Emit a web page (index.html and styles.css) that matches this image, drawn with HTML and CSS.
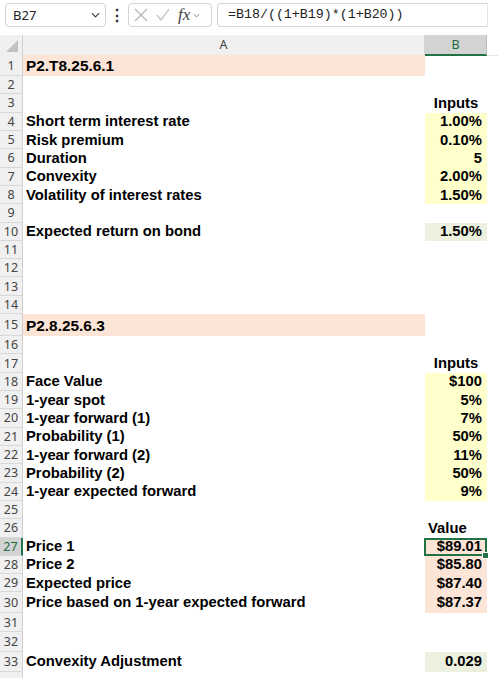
FILE: index.html
```
<!DOCTYPE html>
<html lang="en">
<head>
  <meta charset="UTF-8">
  <title>Convexity Adjustment</title>
  <link rel="stylesheet" href="styles.css">
</head>
<body>
  <div id="formula-bar">
    <div id="name-box">
      <span>B27</span>
      <svg class="chev" viewBox="0 0 10 6"><polyline points="1,1 5,5 9,1"></polyline></svg>
    </div>
    <div id="bar-dots">&#8942;</div>
    <div id="fx-box">
      <svg class="fx-icon" viewBox="0 0 14 14"><line x1="1" y1="1" x2="13" y2="13"></line><line x1="13" y1="1" x2="1" y2="13"></line></svg>
      <svg class="fx-icon" viewBox="0 0 14 14"><polyline points="1,7 5,12 13,1"></polyline></svg>
      <span class="fx-label">fx</span>
      <svg class="chev small" viewBox="0 0 10 6"><polyline points="1,1 5,5 9,1"></polyline></svg>
    </div>
    <div id="formula-input">=B18/((1+B19)*(1+B20))</div>
  </div>

  <div id="sheet">
    <div class="row col-head">
      <div class="corner"><svg viewBox="0 0 12 12"><polygon points="12,0 12,12 0,12"></polygon></svg></div>
      <div class="ch">A</div>
      <div class="ch sel">B</div>
      <div class="ch-rest"></div>
    </div>

    <div class="row h21"><div class="rh">1</div><div class="c peach title">P2.T8.25.6.1</div><div class="c"></div></div>
    <div class="row"><div class="rh">2</div><div class="c"></div><div class="c"></div></div>
    <div class="row"><div class="rh">3</div><div class="c"></div><div class="c mid">Inputs</div></div>
    <div class="row"><div class="rh">4</div><div class="c">Short term interest rate</div><div class="c num yellow">1.00%</div></div>
    <div class="row"><div class="rh">5</div><div class="c">Risk premium</div><div class="c num yellow">0.10%</div></div>
    <div class="row"><div class="rh">6</div><div class="c">Duration</div><div class="c num yellow">5</div></div>
    <div class="row"><div class="rh">7</div><div class="c">Convexity</div><div class="c num yellow">2.00%</div></div>
    <div class="row"><div class="rh">8</div><div class="c">Volatility of interest rates</div><div class="c num yellow">1.50%</div></div>
    <div class="row"><div class="rh">9</div><div class="c"></div><div class="c"></div></div>
    <div class="row"><div class="rh">10</div><div class="c">Expected return on bond</div><div class="c num green">1.50%</div></div>
    <div class="row"><div class="rh">11</div><div class="c"></div><div class="c"></div></div>
    <div class="row"><div class="rh">12</div><div class="c"></div><div class="c"></div></div>
    <div class="row"><div class="rh">13</div><div class="c"></div><div class="c"></div></div>
    <div class="row"><div class="rh">14</div><div class="c"></div><div class="c"></div></div>
    <div class="row h22"><div class="rh">15</div><div class="c peach title">P2.8.25.6.3</div><div class="c"></div></div>
    <div class="row"><div class="rh">16</div><div class="c"></div><div class="c"></div></div>
    <div class="row"><div class="rh">17</div><div class="c"></div><div class="c mid">Inputs</div></div>
    <div class="row"><div class="rh">18</div><div class="c">Face Value</div><div class="c num yellow">$100</div></div>
    <div class="row"><div class="rh">19</div><div class="c">1-year spot</div><div class="c num yellow">5%</div></div>
    <div class="row"><div class="rh">20</div><div class="c">1-year forward (1)</div><div class="c num yellow">7%</div></div>
    <div class="row"><div class="rh">21</div><div class="c">Probability (1)</div><div class="c num yellow">50%</div></div>
    <div class="row"><div class="rh">22</div><div class="c">1-year forward (2)</div><div class="c num yellow">11%</div></div>
    <div class="row"><div class="rh">23</div><div class="c">Probability (2)</div><div class="c num yellow">50%</div></div>
    <div class="row"><div class="rh">24</div><div class="c">1-year expected forward</div><div class="c num yellow">9%</div></div>
    <div class="row"><div class="rh">25</div><div class="c"></div><div class="c"></div></div>
    <div class="row"><div class="rh">26</div><div class="c"></div><div class="c">Value</div></div>
    <div class="row"><div class="rh sel">27</div><div class="c">Price 1</div><div class="c num peach active">$89.01</div></div>
    <div class="row"><div class="rh">28</div><div class="c">Price 2</div><div class="c num peach">$85.80</div></div>
    <div class="row"><div class="rh">29</div><div class="c">Expected price</div><div class="c num peach">$87.40</div></div>
    <div class="row h21"><div class="rh">30</div><div class="c">Price based on 1-year expected forward</div><div class="c num peach">$87.37</div></div>
    <div class="row"><div class="rh">31</div><div class="c"></div><div class="c"></div></div>
    <div class="row h20"><div class="rh">32</div><div class="c"></div><div class="c"></div></div>
    <div class="row h20"><div class="rh">33</div><div class="c">Convexity Adjustment</div><div class="c num green">0.029</div></div>
    <div class="row"><div class="rh"></div><div class="c"></div><div class="c"></div></div>
  </div>
</body>
</html>
```

FILE: styles.css
```
html, body {
  margin: 0;
  padding: 0;
  background: #fff;
  width: 498px;
  height: 678px;
  overflow: hidden;
  font-family: "Liberation Sans", Arial, sans-serif;
}

/* formula bar */
#formula-bar {
  display: flex;
  align-items: flex-start;
  height: 35px;
  padding: 3px 0 0 5px;
  box-sizing: border-box;
  font-family: "Noto Sans", "Open Sans", sans-serif;
  font-size: 13px;
  color: #222;
}
#name-box {
  width: 101px;
  height: 24px;
  box-sizing: border-box;
  border: 1px solid #d4d4d4;
  border-radius: 4px;
  display: flex;
  align-items: center;
  justify-content: space-between;
  padding: 0 5px 0 7px;
}
.chev {
  width: 9px;
  height: 6px;
  fill: none;
  stroke: #444;
  stroke-width: 1.3;
}
.chev.small {
  width: 7px;
  height: 5px;
  stroke: #777;
}
#bar-dots {
  width: 22px;
  height: 24px;
  line-height: 24px;
  text-align: center;
  font-size: 16px;
  font-weight: bold;
  color: #333;
}
#fx-box {
  width: 84px;
  height: 24px;
  box-sizing: border-box;
  border: 1px solid #d4d4d4;
  border-radius: 4px;
  display: flex;
  align-items: center;
  padding: 0 4px 0 5px;
  gap: 8px;
}
.fx-icon {
  width: 14px;
  height: 14px;
  fill: none;
  stroke: #b8b8b8;
  stroke-width: 1.2;
}
#fx-box .fx-label {
  font-family: "Liberation Serif", serif;
  font-style: italic;
  font-size: 17px;
  color: #444;
  margin-right: -5px;
}
#formula-input {
  margin-left: 5px;
  width: 271px;
  height: 24px;
  box-sizing: border-box;
  border: 1px solid #d4d4d4;
  border-right-color: #e4e4e4;
  border-radius: 4px 0 0 4px;
  padding-left: 10px;
  line-height: 22px;
  font-family: "Liberation Mono", monospace;
  font-size: 13.3px;
  color: #222;
}

/* grid */
.row {
  display: grid;
  grid-template-columns: 23px 402px 62px 1fr;
  height: 18.32px;
}
.row.h20 { height: 20px; }
.row.h21 { height: 21px; }
.row.h22 { height: 22px; }

.col-head {
  height: 20px;
  font-family: "Noto Sans", "Open Sans", sans-serif;
  font-size: 12.5px;
  color: #444;
}
.corner {
  background: #f0f0f0;
  border-right: 1px solid #cfcfcf;
  border-bottom: 1px solid #cfcfcf;
  display: flex;
  align-items: flex-end;
  justify-content: flex-end;
  padding: 0 4px 3px 0;
}
.corner svg {
  width: 12px;
  height: 12px;
  fill: #c2c2c2;
}
.ch {
  background: #f0f0f0;
  border-right: 1px solid #d4d4d4;
  border-bottom: 1px solid #cfcfcf;
  text-align: center;
  line-height: 19px;
}
.ch.sel {
  background: #d3d3d3;
  color: #1d6b40;
  border-bottom: 2px solid #217346;
  border-right-color: #bcbcbc;
}
.ch-rest {
  border-bottom: 1px solid #e6e6e6;
}

.rh {
  background: #f0f0f0;
  border-right: 1px solid #cfcfcf;
  border-bottom: 1px solid #d8d8d8;
  display: flex;
  align-items: center;
  justify-content: center;
  font-family: "Noto Sans", "Open Sans", sans-serif;
  font-size: 12.5px;
  color: #444;
  overflow: hidden;
}
.rh.sel {
  background: #d3d3d3;
  color: #1d6b40;
  border-right: 2px solid #217346;
}

.c {
  display: flex;
  align-items: center;
  padding: 0 3px;
  font-size: 14.8px;
  font-weight: bold;
  line-height: 17px;
  color: #000;
  white-space: nowrap;
}
.c.title {
  font-size: 15.4px;
}
.c.num {
  justify-content: flex-end;
  padding-right: 5px;
}
.c.mid {
  justify-content: center;
}
.peach { background: #fce4d6; }
.yellow { background: #ffffcc; }
.green { background: #ebf1de; }

/* active cell outline and fill handle */
.c.active {
  position: relative;
}
.c.active::after {
  content: "";
  position: absolute;
  left: -1px;
  top: 0;
  right: 0;
  bottom: 0;
  border: 2px solid #217346;
}
.c.active::before {
  content: "";
  position: absolute;
  right: -2px;
  bottom: -3px;
  width: 5px;
  height: 5px;
  background: #217346;
  border: 1px solid #fff;
  z-index: 1;
}
```
